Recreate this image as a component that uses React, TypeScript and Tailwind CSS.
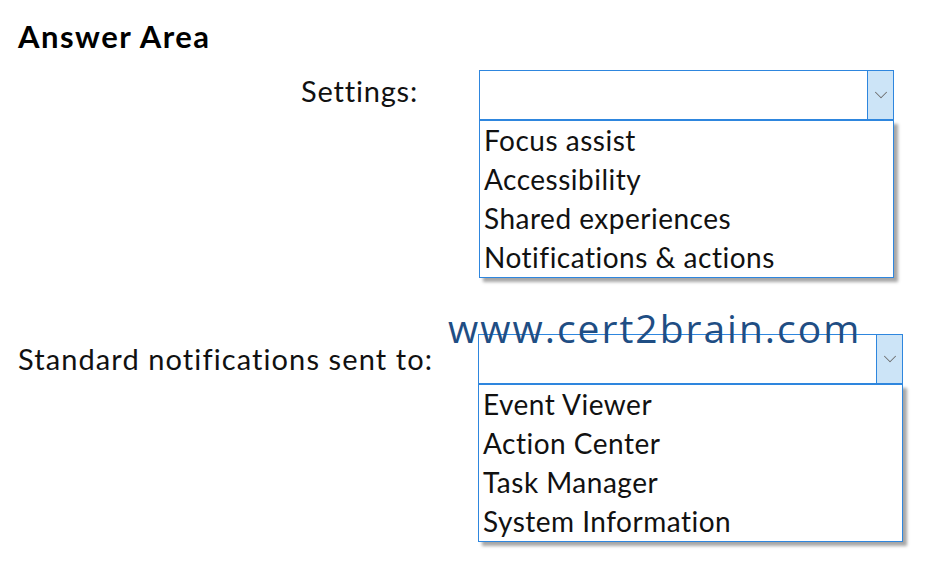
import { ChevronDown } from "lucide-react";

const font = { fontFamily: '"Lato", "Liberation Sans", sans-serif' };

function Dropdown({ width, items }: { width: string; items: string[] }) {
  return (
    <div className={`flex flex-col ${width}`}>
      <div className="flex h-[50px] border border-[#2e86de] bg-white">
        <div className="flex-1" />
        <div className="flex w-[26px] items-center justify-center border-l border-[#2e86de] bg-[#cce4f7]">
          <ChevronDown size={22} strokeWidth={1.1} className="text-[#6d6d6d]" />
        </div>
      </div>
      <ul className="border border-[#2e86de] bg-white pl-[4px] shadow-[4px_4px_3px_rgba(0,0,0,0.35)]">
        {items.map((item) => (
          <li key={item} className="h-[39px] text-[28px] leading-[39px] tracking-[0.5px] text-[#111]">
            {item}
          </li>
        ))}
      </ul>
    </div>
  );
}

export default function App() {
  return (
    <div className="relative h-[569px] w-[925px] bg-white pl-[18px] pt-[14px]" style={font}>
      <h1 className="text-[31px] leading-[44px] tracking-[1.5px] font-bold text-black">Answer Area</h1>

      <div className="mt-[12px] flex">
        <div className="h-[50px] w-[461px] pr-[61px] pt-[1px] text-right text-[29px] leading-[40px] tracking-[0.8px] text-[#111]">
          Settings:
        </div>
        <Dropdown
          width="w-[415px]"
          items={["Focus assist", "Accessibility", "Shared experiences", "Notifications & actions"]}
        />
      </div>

      <div className="mt-[56px] flex">
        <div className="flex h-[50px] w-[460px] items-center text-[29px] tracking-[1.1px] text-[#111]">
          Standard notifications sent to:
        </div>
        <Dropdown
          width="w-[425px]"
          items={["Event Viewer", "Action Center", "Task Manager", "System Information"]}
        />
      </div>

      <div
        className="pointer-events-none absolute left-[448px] top-[303px] text-[39px] leading-[50px] tracking-[2px] text-[#1f4e84]"
        style={{ fontFamily: '"Open Sans", sans-serif' }}
      >
        www.cert2brain.com
      </div>
    </div>
  );
}
